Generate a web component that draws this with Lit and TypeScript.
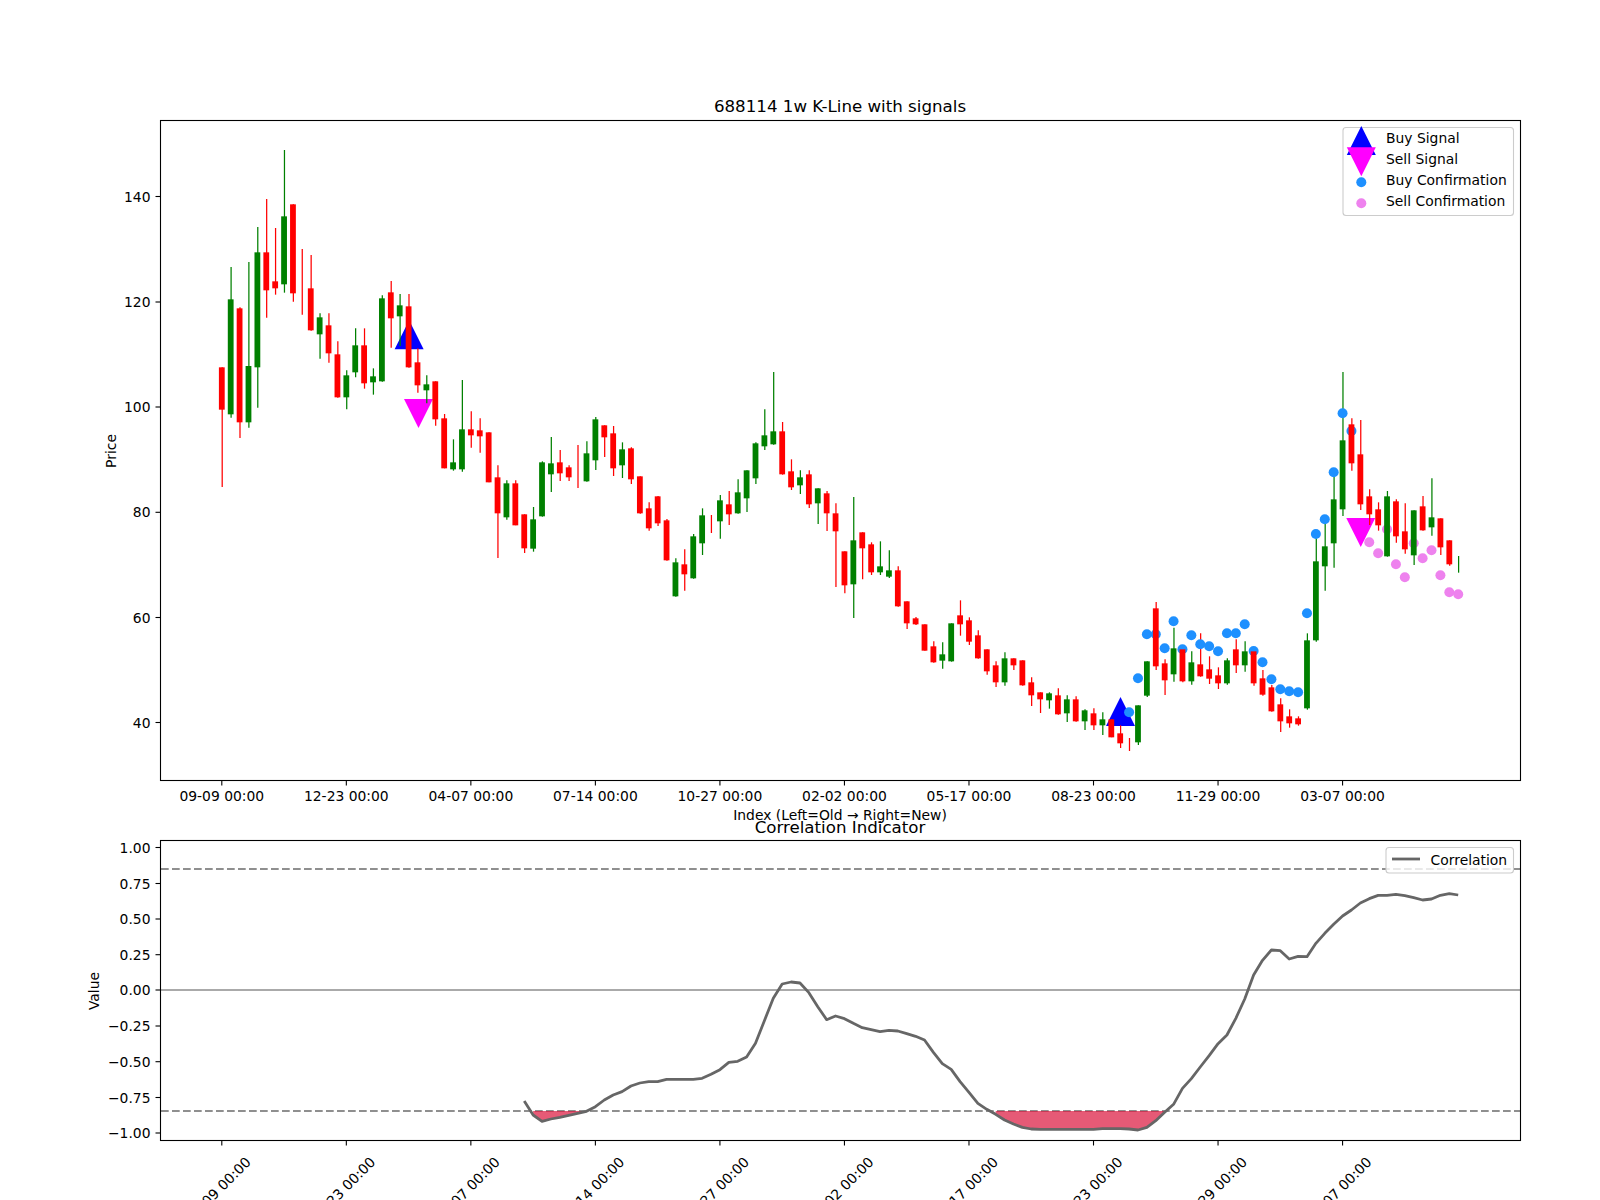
import { LitElement, html, svg, css } from "lit";
import { customElement } from "lit/decorators.js";

type Row = [string, number, number, number | null, number | null];

// Candles as measured: [colour, wick top, wick bottom, body top, body bottom], in third-pixels from a base y.
const CANDLE_GROUPS: { base: number; rows: Row[] }[] = [
  { base: 100, rows: [
    ["r",802,1161,802,929],["g",501,953,598,943],["r",622,1014,625,967],["g",486,983,798,967],["g",381,923,457,802],
    ["r",297,653,457,571],["r",384,584,544,565],["g",150,578,349,553],["r",313,605,313,580],["r",447,644,null,null],
    ["r",465,692,565,691],["g",640,776,652,703],["r",640,788,676,760],["r",724,893,763,892],["g",811,928,826,892],
    ["g",685,832,736,817],["r",685,866,736,850],["g",805,884,829,847],["g",586,845,595,844],["r",543,743,577,655],
    ["g",582,738,616,649],["r",582,803,619,802],["r",745,878,787,856],["g",826,910,853,871],["r",844,977,844,958],
  ]},
  { base: 370, rows: [
    ["r",132,295,145,295],["g",208,302,277,298],["g",30,305,178,298],["r",124,233,178,196],["r",145,248,181,199],
    ["r",187,337,187,337],["r",286,564,322,430],["g",331,449,340,442],["r",331,466,340,466],["r",433,549,433,535],
  ]},
  { base: 350, rows: [
    ["g",471,605,508,596],["g",334,500,337,499],["g",261,426,340,373],["r",300,393,337,370],["r",346,393,352,382],
    ["r",285,414,null,null],["g",274,395,310,394],["g",201,360,208,331],["r",226,321,226,262],["r",228,378,250,355],
    ["g",277,384,298,346],["r",292,402,295,388],["r",379,491,379,490],["r",457,542,475,535],["r",438,528,439,520],
    ["r",507,632,511,631],["g",625,740,637,739],["r",598,722,643,673],["g",552,686,559,685],["g",475,615,496,580],
    ["r",495,549,null,null],["g",435,566,451,514],["r",423,525,463,493],["g",388,491,427,490],["g",361,486,361,445],
    ["g",277,402,280,385],["g",178,300,256,289],["g",66,284,244,283],["r",216,374,244,373],["r",328,420,364,412],
    ["g",361,432,382,406],["r",361,474,373,463],["g",415,522,415,460],["r",423,543,430,490],["r",460,711,490,544],
    ["r",604,730,604,706],["g",441,804,571,703],["r",547,688,547,595],["r",577,675,583,667],["g",574,675,649,667],
    ["g",601,684,661,680],["r",649,770,661,769],["r",754,837,754,820],["r",801,825,805,823],
  ]},
  { base: 480, rows: [
    ["r",433,512,433,512],["r",484,548,499,547],["g",487,566,523,542],["g",430,545,430,544],["r",361,467,406,433],
    ["r",412,495,421,485],["r",451,536,466,535],["r",508,584,508,574],["r",544,621,556,607],["g",517,617,535,607],
    ["r",535,570,535,556],["r",541,617,541,616],["r",592,678,607,646],["r",637,699,637,658],["g",637,686,640,661],
    ["r",625,704,646,703],["g",646,726,658,700],["r",649,725,658,724],["g",688,750,691,724],["r",685,750,700,736],
    ["g",697,765,718,736],["r",718,772,718,772],["r",736,804,760,790],["r",774,813,null,null],["g",676,795,676,787],
    ["g",544,651,544,647],["r",366,570,385,559],["r",538,645,550,601],["g",443,605,505,583],["r",508,607,508,604],
    ["g",514,614,547,604],["r",460,590,553,589],["r",529,612,568,596],["r",562,627,586,610],["g",535,614,541,610],
  ]},
  { base: 360, rows: [
    ["r",838,939,868,916],["g",844,935,874,916],["r",870,977,874,970],["r",930,1007,955,1004],["r",975,1055,982,1054],
    ["r",1015,1116,1033,1084],["r",1048,1103,1069,1090],["r",1069,1097,1075,1093],["g",820,1049,841,1045],["g",535,845,604,841],
    ["g",490,692,559,619],["g",345,623,418,550],["g",36,468,241,448],["r",175,332,193,310],["r",180,450,283,433],
    ["r",388,495,409,463],["r",427,512,448,496],["g",393,590,409,589],["r",418,548,424,529],["r",430,581,514,568],
    ["g",451,615,451,586],["r",408,512,439,511],["g",355,527,472,502],["r",475,585,475,562],["r",541,617,541,613],
    ["g",588,638,null,null],
  ]},
];

const CANDLES = CANDLE_GROUPS.flatMap((g) =>
  g.rows.map(([c, wt, wb, bt, bb]) => ({
    color: c === "r" ? "#ff0000" : "#008000",
    wt: g.base + wt / 3,
    wb: g.base + wb / 3,
    bt: bt === null ? null : g.base + bt / 3,
    bb: bb === null ? null : g.base + bb / 3,
  }))
);

const X0 = 221.8;
const STEP = 8.895;
const xOf = (i: number) => X0 + STEP * i;

const CORR_GROUPS: { base: number; start: number; z: number[] }[] = [
  { base: 970, start: 34, z: [393,435,454,447,442,436,430,424,410,390,375,365,348,339,335,335,328,328,328,328,325,313,299,277,274,261,220,152,85,42,36,39] },
  { base: 970, start: 66, z: [68,110,149,138,146,160,173,179,185,181,183,191,199,210,247,281,298,335,367,400,418,433,450,462,472,477,478,478,478,478,478,478,478] },
  { base: 880, start: 99, z: [746,746,746,747,750,742,722,697,673,625,596,561,527,491,465,415,357,285,241,210,212,237,229,230,190,160,133,108,90,69,56,46,46,43,47,53,60,57,46,41,45] },
];

const CORR = CORR_GROUPS.flatMap((g) => g.z.map((v, k) => ({ i: g.start + k, x: xOf(g.start + k), y: g.base + v / 3 })));

const LOWER_Y = 1111;
const fillPoly = (a: number, b: number) => {
  const pts = CORR.filter((p) => p.i >= a && p.i <= b);
  return [`${pts[0].x},${LOWER_Y}`, ...pts.map((p) => `${p.x},${p.y}`), `${pts[pts.length - 1].x},${LOWER_Y}`].join(" ");
};

const BUY_DOTS: [number, number][] = [
  [102,712.3],[103,678.3],[104,634.3],[105,634.3],[106,648.3],[107,621.3],[108,649.3],[109,635.3],[110,644.3],[111,646.3],
  [112,651.3],[113,633.3],[114,633.3],[115,624.3],[116,651],[117,662.3],[118,679.3],[119,689.3],[120,691.3],[121,692.3],
  [122,613.3],[123,534],[124,519.3],[125,472.3],[126,413.3],[127,431],
];
const SELL_DOTS: [number, number][] = [
  [129,542.3],[130,553.3],[131,529.3],[132,564.3],[133,577.3],[134,543.3],[135,558.3],[136,550.3],[137,575.3],[138,592.3],[139,594.3],
];

const TICKS = ["09-09 00:00","12-23 00:00","04-07 00:00","07-14 00:00","10-27 00:00","02-02 00:00","05-17 00:00","08-23 00:00","11-29 00:00","03-07 00:00"];
const PRICE_TICKS: [string, number][] = [["140",196.5],["120",302],["100",407],["80",512.3],["60",617.5],["40",722.5]];
const VALUE_TICKS: [string, number][] = [
  ["1.00",847.5],["0.75",883.5],["0.50",919],["0.25",954.7],["0.00",990],
  ["\u22120.25",1026],["\u22120.50",1061.7],["\u22120.75",1097.5],["\u22121.00",1133],
];

const up = (x: number, base: number, cls: string) =>
  svg`<polygon class=${cls} points="${x - 14.5},${base} ${x + 14.5},${base} ${x},${base - 29}"></polygon>`;
const down = (x: number, base: number, cls: string) =>
  svg`<polygon class=${cls} points="${x - 14.5},${base} ${x + 14.5},${base} ${x},${base + 29}"></polygon>`;

@customElement("app-root")
export class AppRoot extends LitElement {
  static styles = css`
    :host { display: block; width: 1600px; height: 1200px; overflow: hidden; background: #fff; }
    svg { display: block; }
    text { font-family: "DejaVu Sans", sans-serif; font-size: 13.89px; fill: #000; }
    .title { font-size: 16.67px; text-anchor: middle; }
    .mid { text-anchor: middle; }
    .end { text-anchor: end; }
    .spine { fill: none; stroke: #000; stroke-width: 1.1; }
    .tick { stroke: #000; stroke-width: 1.1; }
    .wick { stroke-width: 1.25; }
    .buy { fill: #0000ff; }
    .sell { fill: #ff00ff; }
    .buy-dot { fill: #1e90ff; }
    .sell-dot { fill: #ee82ee; }
    .dash { stroke: #8f8f8f; stroke-width: 2.08; stroke-dasharray: 7.7 3.3; }
    .zero { stroke: #aaaaaa; stroke-width: 2.08; }
    .band { fill: #dc143c; fill-opacity: 0.7; }
    .corr { fill: none; stroke: #666666; stroke-width: 2.78; stroke-linejoin: round; }
    .legend { fill: #fff; fill-opacity: 0.8; stroke: #cccccc; stroke-width: 1.1; }
  `;

  render() {
    const tickXs = TICKS.map((_, k) => xOf(k * 14));
    return html`
      <svg width="1600" height="1200" viewBox="0 0 1600 1200">
        <text class="title" x="840" y="112">688114 1w K-Line with signals</text>

        ${up(xOf(21) + 0.5, 349.3, "buy")}
        ${up(xOf(101) + 0.3, 726, "buy")}
        ${down(xOf(22) + 1, 399, "sell")}
        ${down(xOf(128) + 0.4, 518, "sell")}

        ${CANDLES.map((c, i) => svg`<line class="wick" stroke=${c.color} x1=${xOf(i) + 0.4} x2=${xOf(i) + 0.4} y1=${c.wt} y2=${c.wb}></line>`)}
        ${BUY_DOTS.map(([i, y]) => svg`<circle class="buy-dot" cx=${xOf(i)} cy=${y} r="5"></circle>`)}
        ${SELL_DOTS.map(([i, y]) => svg`<circle class="sell-dot" cx=${xOf(i)} cy=${y} r="5"></circle>`)}
        ${CANDLES.map((c, i) =>
          c.bt === null
            ? null
            : svg`<rect fill=${c.color} x=${xOf(i) - 2.9} width="5.8" y=${c.bt} height=${Math.max((c.bb as number) - c.bt, 1)}></rect>`
        )}

        <rect class="spine" x="160.5" y="120.5" width="1360" height="660"></rect>
        ${tickXs.map((x, k) => svg`
          <line class="tick" x1=${x} x2=${x} y1="781" y2="785.5"></line>
          <text class="mid" x=${x} y="801">${TICKS[k]}</text>
        `)}
        ${PRICE_TICKS.map(([t, y]) => svg`
          <line class="tick" x1="155.5" x2="160" y1=${y} y2=${y}></line>
          <text class="end" x="150.5" y=${y + 5}>${t}</text>
        `)}
        <text class="mid" transform="translate(116 451) rotate(-90)">Price</text>
        <text class="mid" x="840" y="820">Index (Left=Old → Right=New)</text>
        <text class="title" x="840" y="832.5">Correlation Indicator</text>

        <rect class="legend" x="1343" y="127.5" width="170.5" height="88" rx="3"></rect>
        ${up(1361.3, 155, "buy")}
        ${down(1361.3, 147.3, "sell")}
        <circle class="buy-dot" cx="1361.3" cy="182.3" r="5"></circle>
        <circle class="sell-dot" cx="1361.3" cy="203.3" r="5"></circle>
        <text x="1386" y="143.3">Buy Signal</text>
        <text x="1386" y="164.2">Sell Signal</text>
        <text x="1386" y="185.2">Buy Confirmation</text>
        <text x="1386" y="206.2">Sell Confirmation</text>

        <line class="dash" x1="161" x2="1520" y1="869" y2="869"></line>
        <line class="dash" x1="161" x2="1520" y1=${LOWER_Y} y2=${LOWER_Y}></line>
        <line class="zero" x1="161" x2="1520" y1="990" y2="990"></line>
        <polygon class="band" points=${fillPoly(35, 41)}></polygon>
        <polygon class="band" points=${fillPoly(87, 106)}></polygon>
        <polyline class="corr" points=${CORR.map((p) => `${p.x},${p.y}`).join(" ")}></polyline>

        <rect class="spine" x="160.5" y="840.5" width="1360" height="300"></rect>
        ${tickXs.map((x, k) => svg`
          <line class="tick" x1=${x} x2=${x} y1="1141" y2="1145.5"></line>
          <text class="mid" transform="translate(${x} 1193) rotate(-45)">${TICKS[k]}</text>
        `)}
        ${VALUE_TICKS.map(([t, y]) => svg`
          <line class="tick" x1="155.5" x2="160" y1=${y} y2=${y}></line>
          <text class="end" x="150.5" y=${y + 5}>${t}</text>
        `)}
        <text class="mid" transform="translate(98.5 991) rotate(-90)">Value</text>

        <rect class="legend" x="1386" y="847.5" width="127.5" height="25.5" rx="3"></rect>
        <line class="corr" x1="1392" x2="1420" y1="859" y2="859"></line>
        <text x="1430.6" y="864.5">Correlation</text>
      </svg>
    `;
  }
}
